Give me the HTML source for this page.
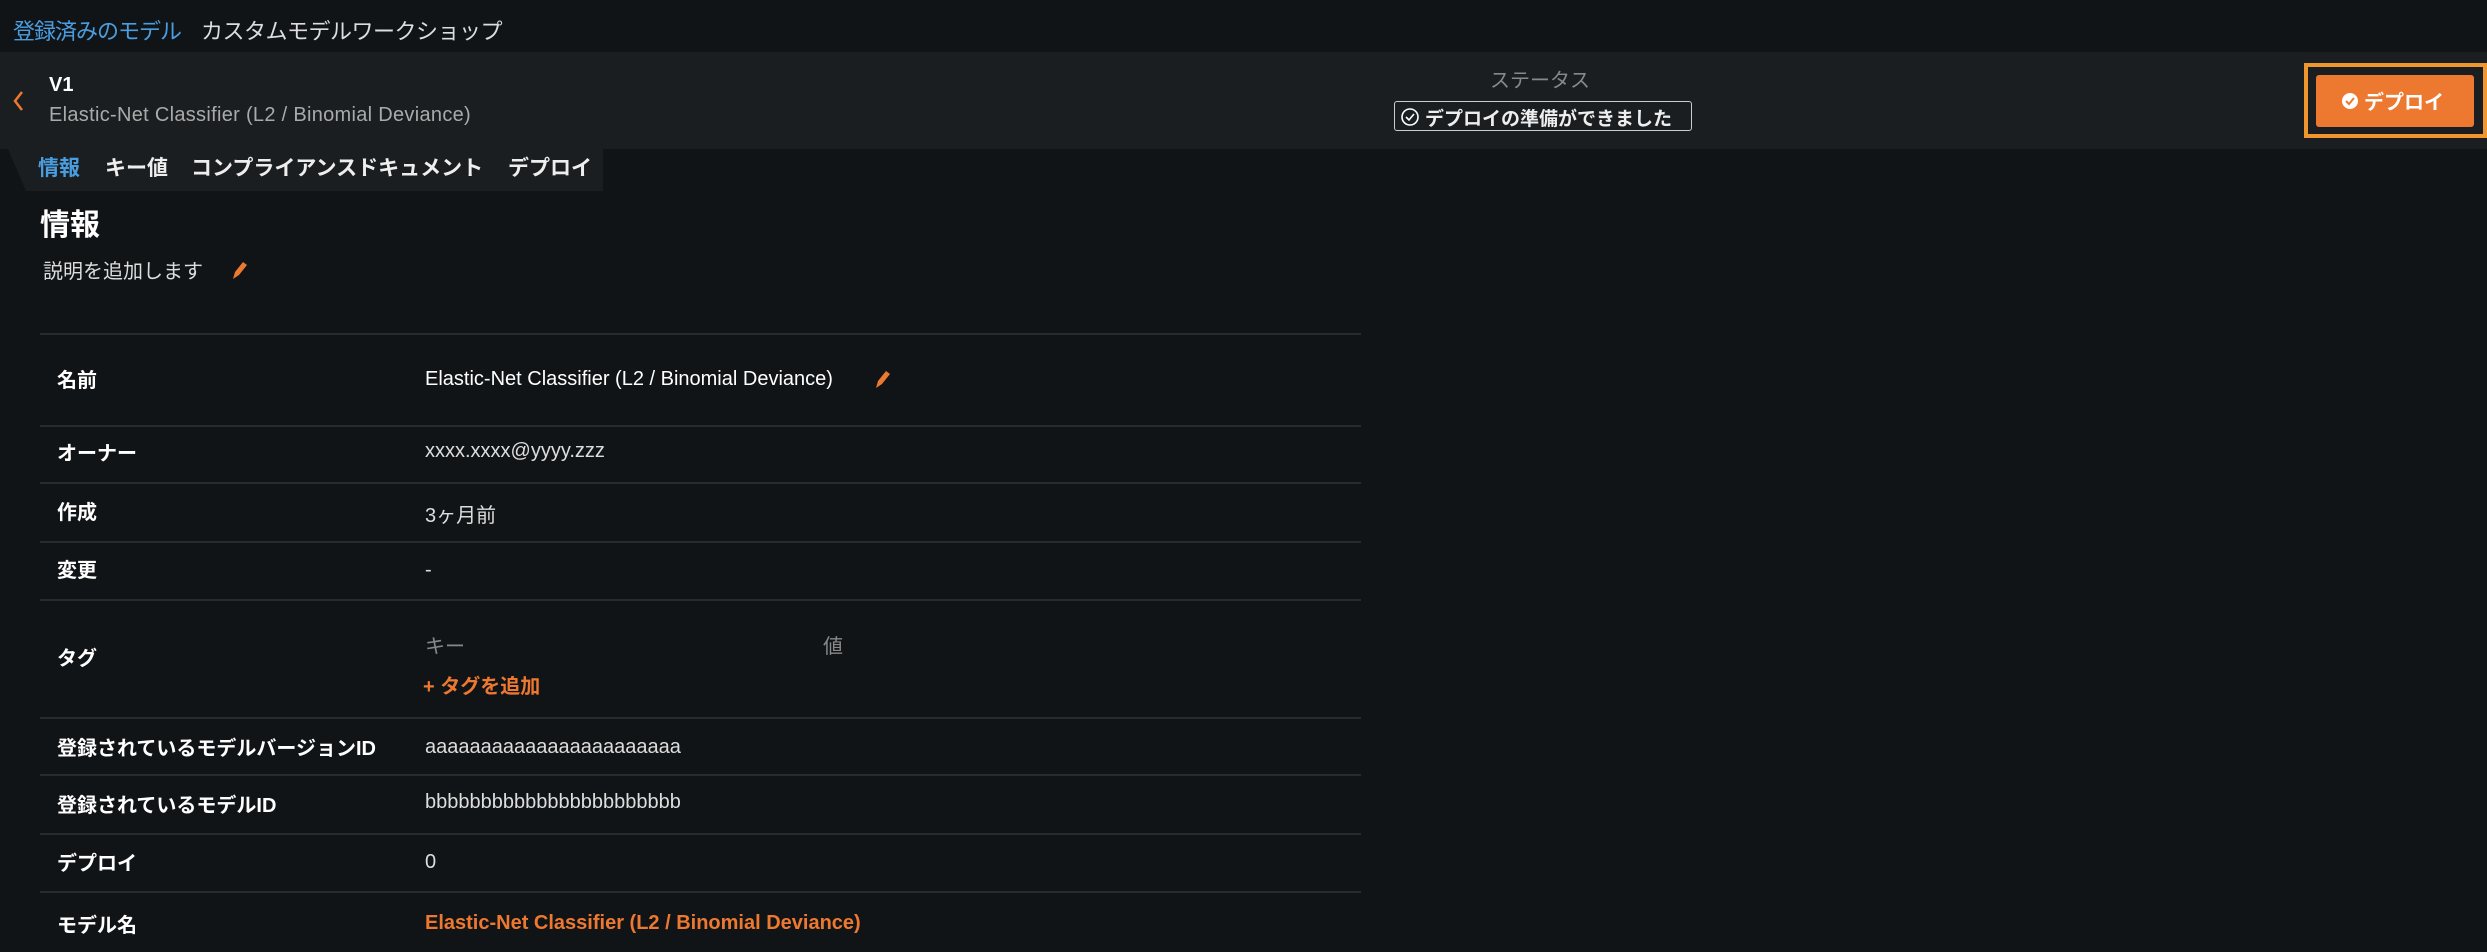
<!DOCTYPE html>
<html><head><meta charset="utf-8"><style>
*{margin:0;padding:0;box-sizing:border-box}
body{width:2487px;height:952px;background:#111417;overflow:hidden;position:relative;font-family:"Liberation Sans","Noto Sans CJK JP",sans-serif;color:#e6e6e6}
.a{position:absolute;white-space:nowrap}
.lbl{font-weight:bold;color:#fff;font-size:20px;left:57px}
.val{font-size:20px;color:#ddd;left:425px}
.hr{position:absolute;left:40px;width:1321px;height:2px;background:#272b2f}
</style></head><body>
<div class="a" style="left:13px;top:14px;font-size:22px;color:#4a9ee0;letter-spacing:-1px">登録済みのモデル</div>
<div class="a" style="left:201px;top:14px;font-size:22px;color:#ddd;letter-spacing:-0.5px">カスタムモデルワークショップ</div>

<div class="a" style="left:0;top:52px;width:2487px;height:97px;background:#1b1e21"></div>
<svg class="a" style="left:12px;top:90px" width="14" height="22"><path d="M10 2 L3 11 L10 20" stroke="#ed7830" stroke-width="2.5" fill="none"/></svg>
<div class="a" style="left:49px;top:74px;font-size:20px;font-weight:bold;color:#fff">V1</div>
<div class="a" style="left:49px;top:104px;font-size:20px;color:#aaa;letter-spacing:0.3px">Elastic-Net Classifier (L2 / Binomial Deviance)</div>
<div class="a" style="left:1490px;top:64px;font-size:20px;color:#888">ステータス</div>
<div class="a" style="left:1394px;top:101px;width:298px;height:30px;border:1.5px solid #ccc;border-radius:3px;font-size:19px;font-weight:bold;color:#eee;padding:2px 0 0 30px">デプロイの準備ができました</div>
<svg class="a" style="left:1400px;top:107px" width="20" height="20"><circle cx="10" cy="10" r="8" stroke="#fff" stroke-width="1.6" fill="none"/><path d="M6 10 L9 13 L14 7" stroke="#fff" stroke-width="1.6" fill="none"/></svg>
<div class="a" style="left:2304px;top:63px;width:183px;height:75px;border:4px solid #f0962e;background:#1b1e21"></div>
<div class="a" style="left:2316px;top:75px;width:158px;height:52px;background:#ed7830;border-radius:3px;color:#fff;font-weight:bold;font-size:20px;padding:11px 0 0 48px">デプロイ</div>
<svg class="a" style="left:2340px;top:91px" width="20" height="20"><circle cx="10" cy="10" r="8" fill="#fff"/><path d="M6 10 L9 13 L14 7" stroke="#ed7830" stroke-width="2" fill="none"/></svg>

<svg class="a" style="left:8px;top:149px" width="600" height="42"><path d="M0 0 H595 V42 H18 Z" fill="#1b1e21"/></svg>
<div class="a" style="left:38px;top:152px;font-size:21px;font-weight:bold;color:#4a9ee0">情報</div>
<div class="a" style="left:105px;top:152px;font-size:21px;font-weight:bold;color:#eee">キー値</div>
<div class="a" style="left:191px;top:152px;font-size:21px;font-weight:bold;color:#eee">コンプライアンスドキュメント</div>
<div class="a" style="left:508px;top:152px;font-size:21px;font-weight:bold;color:#eee">デプロイ</div>

<div class="a" style="left:40px;top:200px;font-size:30px;font-weight:bold;color:#fff">情報</div>
<div class="a" style="left:43px;top:255px;font-size:20px;color:#ddd">説明を追加します</div>
<svg class="a" style="left:229px;top:259px" width="20" height="22"><path d="M4 20 L6 13 L14 3 L18 6 L10 16 Z" fill="#ed7830"/></svg>

<div class="hr" style="top:333px"></div>
<div class="hr" style="top:425px"></div>
<div class="hr" style="top:482px"></div>
<div class="hr" style="top:541px"></div>
<div class="hr" style="top:599px"></div>
<div class="hr" style="top:717px"></div>
<div class="hr" style="top:774px"></div>
<div class="hr" style="top:833px"></div>
<div class="hr" style="top:891px"></div>

<div class="a lbl" style="top:364px">名前</div>
<div class="a val" style="top:368px;color:#fff">Elastic-Net Classifier (L2 / Binomial Deviance)</div>
<svg class="a" style="left:872px;top:368px" width="20" height="22"><path d="M4 20 L6 13 L14 3 L18 6 L10 16 Z" fill="#ed7830"/></svg>
<div class="a lbl" style="top:437px">オーナー</div>
<div class="a val" style="top:440px">xxxx.xxxx@yyyy.zzz</div>
<div class="a lbl" style="top:496px">作成</div>
<div class="a val" style="top:499px">3ヶ月前</div>
<div class="a lbl" style="top:554px">変更</div>
<div class="a val" style="top:559px">-</div>
<div class="a lbl" style="top:642px">タグ</div>
<div class="a val" style="top:630px;color:#888">キー</div>
<div class="a val" style="top:630px;left:823px;color:#888">値</div>
<div class="a val" style="top:670px;left:423px;color:#ed7830;font-weight:bold">+ タグを追加</div>
<div class="a lbl" style="top:732px">登録されているモデルバージョンID</div>
<div class="a val" style="top:736px">aaaaaaaaaaaaaaaaaaaaaaa</div>
<div class="a lbl" style="top:789px">登録されているモデルID</div>
<div class="a val" style="top:791px">bbbbbbbbbbbbbbbbbbbbbbb</div>
<div class="a lbl" style="top:847px">デプロイ</div>
<div class="a val" style="top:851px">0</div>
<div class="a lbl" style="top:909px">モデル名</div>
<div class="a val" style="top:912px;color:#ed7830;font-weight:bold">Elastic-Net Classifier (L2 / Binomial Deviance)</div>
</body></html>
